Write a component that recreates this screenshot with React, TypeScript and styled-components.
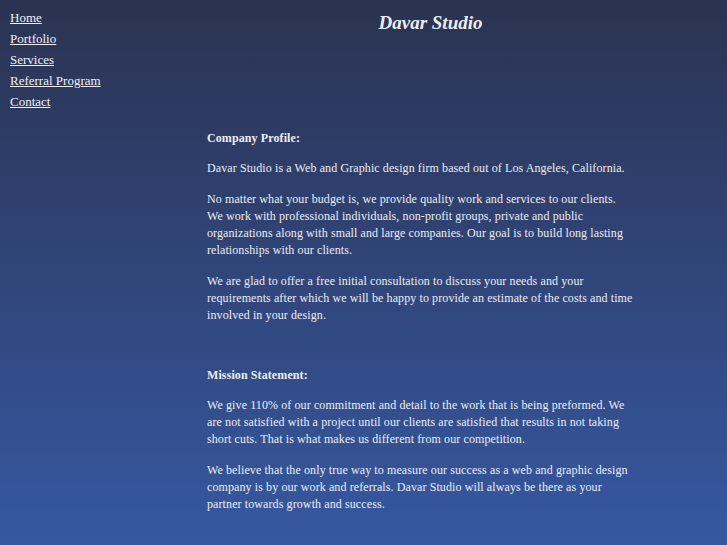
import styled, { createGlobalStyle } from "styled-components";

const GlobalStyle = createGlobalStyle`
  html, body {
    margin: 0;
    padding: 0;
  }
  body {
    min-height: 545px;
    background: linear-gradient(to bottom, #2a3350 0%, #2d3a61 20%, #31477d 55%, #3658a1 100%);
    font-family: "Liberation Serif", "Times New Roman", serif;
    color: #ecedf3;
  }
`;

const Page = styled.div`
  display: grid;
  grid-template-columns: 207px 447px;
  min-height: 545px;
`;

const Nav = styled.nav`
  display: flex;
  flex-direction: column;
  gap: 5px;
  padding: 10px 0 0 10px;
`;

const NavLink = styled.a`
  color: #eef0f6;
  font-size: 13px;
  line-height: 16px;
  text-decoration: underline;
  cursor: pointer;
`;

const Main = styled.main`
  display: flex;
  flex-direction: column;
`;

const Title = styled.h1`
  margin: 12px 0 0;
  text-align: center;
  font-size: 19px;
  font-weight: bold;
  font-style: italic;
  line-height: 22px;
`;

const Section = styled.section<{ $top: number }>`
  margin-top: ${(p) => p.$top}px;
  width: 470px;
`;

const Heading = styled.p`
  margin: 0 0 13px;
  font-size: 12px;
  font-weight: bold;
  line-height: 17px;
  letter-spacing: 0.1px;
`;

const Para = styled.p`
  margin: 0 0 14px;
  font-size: 12px;
  line-height: 17px;
  letter-spacing: 0.1px;
  white-space: nowrap;
`;

const Spacer = styled.div`
  height: 29px;
`;

const links = ["Home", "Portfolio", "Services", "Referral Program", "Contact"];

const Lines = ({ lines }: { lines: string[] }) => (
  <Para>
    {lines.map((l, i) => (
      <span key={i}>
        {l}
        {i < lines.length - 1 && <br />}
      </span>
    ))}
  </Para>
);

export default function App() {
  return (
    <>
      <GlobalStyle />
      <Page>
        <Nav>
          {links.map((l) => (
            <NavLink key={l}>{l}</NavLink>
          ))}
        </Nav>
        <Main>
          <Title>Davar Studio</Title>
          <Section $top={96}>
            <Heading>Company Profile:</Heading>
            <Lines
              lines={[
                "Davar Studio is a Web and Graphic design firm based out of Los Angeles, California.",
              ]}
            />
            <Lines
              lines={[
                "No matter what your budget is, we provide quality work and services to our clients.",
                "We work with professional individuals, non-profit groups, private and public",
                "organizations along with small and large companies. Our goal is to build long lasting",
                "relationships with our clients.",
              ]}
            />
            <Lines
              lines={[
                "We are glad to offer a free initial consultation to discuss your needs and your",
                "requirements after which we will be happy to provide an estimate of the costs and time",
                "involved in your design.",
              ]}
            />
            <Spacer />
            <Heading>Mission Statement:</Heading>
            <Lines
              lines={[
                "We give 110% of our commitment and detail to the work that is being preformed. We",
                "are not satisfied with a project until our clients are satisfied that results in not taking",
                "short cuts. That is what makes us different from our competition.",
              ]}
            />
            <Lines
              lines={[
                "We believe that the only true way to measure our success as a web and graphic design",
                "company is by our work and referrals. Davar Studio will always be there as your",
                "partner towards growth and success.",
              ]}
            />
          </Section>
        </Main>
      </Page>
    </>
  );
}
